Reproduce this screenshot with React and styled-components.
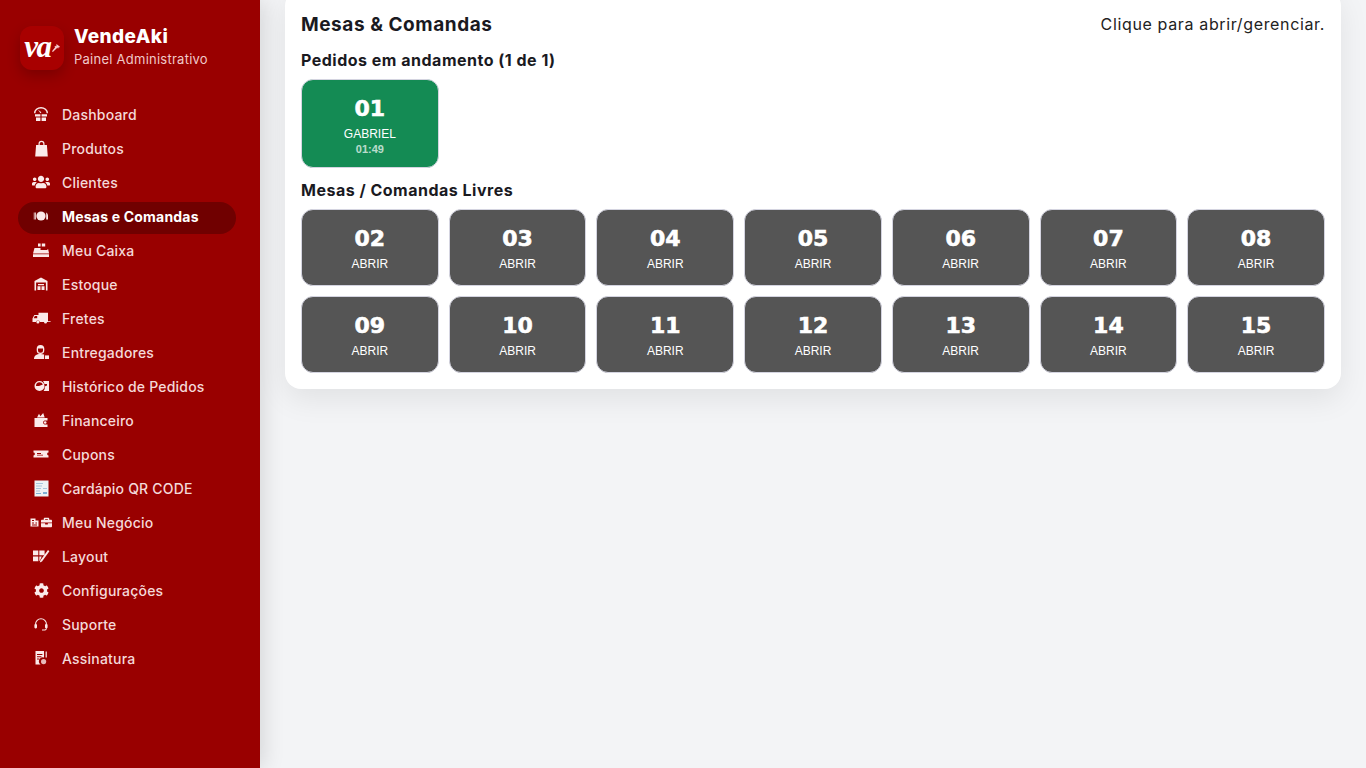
import React from 'react';
import styled, { createGlobalStyle } from 'styled-components';
import { FaUsers, FaCog, FaBriefcase } from 'react-icons/fa';

const GlobalStyle = createGlobalStyle`
  html, body { margin: 0; height: 100%; overflow: hidden; }
  body { font-family: Inter, "Noto Sans", Arial, sans-serif; background: #f3f4f6; }
  * { box-sizing: border-box; }
`;

const Page = styled.div`
  display: flex;
  height: 768px;
  overflow: hidden;
`;

const Sidebar = styled.aside`
  width: 260px;
  flex: none;
  background: #990000;
  box-shadow: 4px 0 20px rgba(0, 0, 0, 0.12);
  padding: 26px 24px 0 18px;
  z-index: 1;
`;

const Brand = styled.div`
  display: flex;
  align-items: flex-start;
  gap: 10px;
  height: 44px;
  padding-left: 2px;
  margin-bottom: 30px;
`;

const Logo = styled.div`
  position: relative;
  width: 44px;
  height: 44px;
  border-radius: 12px;
  background: #a80000;
  box-shadow: 0 6px 14px rgba(0, 0, 0, 0.2);
  display: flex;
  align-items: center;
  justify-content: center;
  color: #fff;
  font: italic 700 31px/1 "Liberation Serif", serif;
  letter-spacing: -1.5px;
  padding-right: 9px;
  padding-bottom: 3px;
  svg { position: absolute; right: 4px; top: 18px; }
`;

const BrandText = styled.div`
  display: flex;
  flex-direction: column;
  gap: 3px;
  margin-top: -1px;
`;

const BrandName = styled.div`
  color: #fff;
  font-size: 19px;
  line-height: 23px;
  font-weight: 800;
  letter-spacing: 0.4px;
`;

const BrandSub = styled.div`
  color: #f0c9c9;
  font-size: 13px;
  line-height: 16px;
  letter-spacing: 0.25px;
`;

const Nav = styled.nav`
  display: flex;
  flex-direction: column;
  gap: 2px;
`;

const NavItem = styled.a`
  display: flex;
  align-items: center;
  gap: 10px;
  height: 32px;
  padding: 0 0 4px 12px;
  border-radius: 16px;
  font-size: 14px;
  letter-spacing: 0.2px;
  font-weight: ${p => (p.$active ? 700 : 500)};
  color: ${p => (p.$active ? '#fff' : '#f4d9d9')};
  background: ${p => (p.$active ? '#700000' : 'transparent')};
`;

const NavIcon = styled.span`
  width: 22px;
  height: 18px;
  flex: none;
  display: flex;
  align-items: center;
  justify-content: center;
  gap: 2px;
  color: #fbeaea;
`;

const Main = styled.main`
  flex: 1;
  padding: 0 25px;
`;

const Card = styled.section`
  margin-top: -10px;
  background: #fff;
  border-radius: 16px;
  padding: 20px 16px 16px;
  box-shadow: 0 10px 30px rgba(0, 0, 0, 0.08);
`;

const CardHeader = styled.header`
  display: flex;
  justify-content: space-between;
  align-items: center;
  height: 28px;
  margin-bottom: 12px;
`;

const Title = styled.h2`
  margin: 0;
  font-size: 19px;
  font-weight: 700;
  letter-spacing: 0.55px;
  color: #1a1a1f;
`;

const Hint = styled.span`
  font-size: 16px;
  letter-spacing: 0.64px;
  color: #222;
`;

const SectionTitle = styled.h3`
  margin: 0 0 9px;
  font-size: 16px;
  line-height: 20px;
  font-weight: 700;
  letter-spacing: 0.5px;
  color: #1a1a1f;
`;

const Grid = styled.div`
  display: grid;
  grid-template-columns: repeat(7, 1fr);
  gap: 10px;
  margin-bottom: ${p => (p.$last ? 0 : '12px')};
`;

const Tile = styled.button`
  display: flex;
  flex-direction: column;
  align-items: center;
  height: ${p => (p.$busy ? '89px' : '77px')};
  padding: 16px 0 0;
  border: 1px solid #d4d4e0;
  border-radius: 12px;
  color: #fff;
  background: ${p => (p.$busy ? '#148b54' : '#555555')};
  font-family: "Liberation Sans", Arial, sans-serif;
`;

const TileNumber = styled.span`
  font: 700 22px/26px "DejaVu Sans", Arial, sans-serif;
  -webkit-text-stroke: 0.6px #fff;
`;

const TileLabel = styled.span`
  margin-top: 5px;
  font-size: 12px;
  line-height: 14px;
`;

const TileTime = styled.span`
  margin-top: 2px;
  font-size: 11px;
  line-height: 12px;
  font-weight: 700;
  opacity: 0.7;
`;

const Svg = ({ w = 16, h = 16, vb = '0 0 16 16', children }) => (
  <svg width={w} height={h} viewBox={vb} fill="currentColor">{children}</svg>
);

const icons = {
  dashboard: (
    <Svg>
      <path d="M1 7.200a7 6.200 0 0 1 14 0h-1.400a5.600 4.800 0 0 0-11.200 0z" />
      <path d="M4.800 3.400l3.600 2.900-.9 1z" />
      <path d="M2 8.200h5.400v2.200H2zM8.600 8.200H14v2.200H8.600zM3 11.400h4.400V15H3zM8.600 11.400H13V15H8.600z" />
    </Svg>
  ),
  bag: (
    <Svg w={15} h={17} vb="0 0 15 17">
      <path fillRule="evenodd" d="M4.500 5V3.800a3 3 0 0 1 6 0V5h2.400l.9 11.500H1.200L2.100 5zm1.200 0h3.600V3.800a1.800 1.800 0 0 0-3.600 0z" />
    </Svg>
  ),
  users: <FaUsers size={18} />,
  plate: (
    <Svg>
      <circle cx="8" cy="8" r="4.600" />
      <path d="M.8 4.500h.8v7H.8zM2.200 4.500h.8v7h-.8zM13.200 4.500c1 .6 1.800 2 1.800 3.200v3.800h-1.800z" />
    </Svg>
  ),
  register: (
    <Svg w={18} h={16} vb="0 0 18 16">
      <path fillRule="evenodd" d="M6 1.500h2.600v3H6zM9.800 1.500h3.400v3H9.800zM2.500 6h6v2h7V7h.6l1 4.500H1zM1 12.200h16V15H1z" />
    </Svg>
  ),
  store: (
    <Svg>
      <path d="M8 1.500L1.500 5v9.500h1.600V6.400h9.800v8.100h1.600V5z" />
      <path d="M5 8h6v1.300H5zM4.500 10.200h3v3.800h-3zM8.500 10.200h3v3.800h-3z" />
    </Svg>
  ),
  truck: (
    <Svg w={19} h={12} vb="0 0 19 12">
      <path fillRule="evenodd" d="M6.500.800h9.500v8.400h2.600v.8H7.800a2 2 0 0 0-3.800 0H.500V6.600l1.800-3.600h4.200zM2.800 4L1.700 6.200h3.500V4z" />
      <circle cx="5.900" cy="10" r="1.500" />
      <circle cx="13.500" cy="10" r="1.500" />
    </Svg>
  ),
  courier: (
    <Svg w={17} h={16} vb="0 0 17 16">
      <path fillRule="evenodd" d="M7.500 1a3.800 3.800 0 0 1 3.800 3.800v1.400a3.800 3.800 0 0 1-7.600 0V4.800A3.800 3.800 0 0 1 7.500 1zm0 3.500H5v1.700a2.500 2.500 0 0 0 5 0V4.500z" />
      <path d="M1 15c0-3.200 2.400-5 6.500-5 1.400 0 2.600.2 3.600.6V15z" />
      <path d="M12 11.400h4v3.600h-4z" />
    </Svg>
  ),
  history: (
    <Svg w={17} h={16} vb="0 0 17 16">
      <path fillRule="evenodd" d="M6.500 3a5 5 0 1 0 0 10 5 5 0 0 0 0-10zm0 1.300a3.700 3.700 0 0 1 3.400 2.200L6 8H3a3.700 3.700 0 0 1 3.500-3.700z" />
      <path d="M10 3h6v10h-5.400a6.200 6.200 0 0 0 1.200-4.600l2.200-1V6h-2.600A6.500 6.500 0 0 0 10 3z" />
    </Svg>
  ),
  wallet: (
    <Svg>
      <path d="M4 5.500L6 1.800l1.400 2.400L10.200 1l1.500 4.500z" />
      <path d="M1.500 6h13v2.600h-3a2 2 0 0 0 0 3.800h3V15h-13z" />
      <circle cx="12.200" cy="10.500" r="1.300" />
    </Svg>
  ),
  coupon: (
    <Svg>
      <path fillRule="evenodd" d="M.5 4.500h15v2.100a1.400 1.400 0 0 0 0 2.800v2.100H.5V9.400a1.400 1.400 0 0 0 0-2.800zM4 7v1h4V7zm0 1.800v.7h6v-.7z" />
    </Svg>
  ),
  menu: (
    <Svg w={15} h={17} vb="0 0 15 17">
      <rect x=".5" y=".5" width="14" height="16" fill="#eef3f5" />
      <path d="M2 3h7v1H2zM2 5.500h6v1H2zM2 8h5v1H2zM9 8h4v1H9zM2 10.500h4v1H2z" fill="#a9c6dc" />
      <path d="M9 12h4v2H9zM2 13h5v1H2z" fill="#7fb0d4" />
    </Svg>
  ),
  business: (
    <>
      <Svg w={9} h={9} vb="0 0 9 9">
        <path fillRule="evenodd" d="M.5.500h5v2h3v6h-8zM2 2v1h2V2zm0 2.400v1h2v-1zM5.400 4.400v1h1.600v-1zM2 6.600v1h5v-1z" />
      </Svg>
      <FaBriefcase size={11} />
    </>
  ),
  layout: (
    <Svg w={18} h={16} vb="0 0 18 16">
      <path d="M1 2.500h5.300v4.800H1zM7.300 2.500h5.300v4.800H7.300zM1 8.400h5.300v4.800H1zM7.300 8.400h2.400L8.200 12l-.9 1.200z" />
      <path d="M16 2l1.400 1.200L10 13.600l-2.200 1 .5-2.200z" />
    </Svg>
  ),
  config: <FaCog size={15} />,
  support: (
    <Svg>
      <path d="M8 2.200a6 6 0 0 0-6 6h1.100a4.900 4.900 0 0 1 9.800 0H14a6 6 0 0 0-6-6z" />
      <rect x="1.400" y="8" width="2.600" height="4.400" rx="1.100" />
      <rect x="12" y="8" width="2.600" height="4.400" rx="1.100" />
      <path d="M13 12.200h.9c0 1.400-1.200 2.300-3 2.300H9v-.9h1.900c1.200 0 2.100-.5 2.100-1.400z" />
    </Svg>
  ),
  signature: (
    <Svg>
      <path fillRule="evenodd" d="M2.500 1h8.500v6.400a4 4 0 0 0-3.400 7.100H2.500zM4 4v1h5.400V4zm0 2.200v1h4.400v-1zm0 2.200v1h2.400v-1z" />
      <circle cx="10.600" cy="11.600" r="2.600" fillOpacity=".8" />
      <path d="M12.600 1.500h1.200v6h-1.200z" />
    </Svg>
  ),
};

const navItems = [
  ['dashboard', 'Dashboard'],
  ['bag', 'Produtos'],
  ['users', 'Clientes'],
  ['plate', 'Mesas e Comandas', true],
  ['register', 'Meu Caixa'],
  ['store', 'Estoque'],
  ['truck', 'Fretes'],
  ['courier', 'Entregadores'],
  ['history', 'Histórico de Pedidos'],
  ['wallet', 'Financeiro'],
  ['coupon', 'Cupons'],
  ['menu', 'Cardápio QR CODE'],
  ['business', 'Meu Negócio'],
  ['layout', 'Layout'],
  ['config', 'Configurações'],
  ['support', 'Suporte'],
  ['signature', 'Assinatura'],
];

const freeTables = ['02', '03', '04', '05', '06', '07', '08', '09', '10', '11', '12', '13', '14', '15'];

export default function App() {
  return (
    <Page>
      <GlobalStyle />
      <Sidebar>
        <Brand>
          <Logo>
            va
            <svg width="8" height="9" viewBox="0 0 9 10" fill="#f6caca">
              <path d="M5 0l4 3-1 1-1-.7.6 1-1 .7-.7-1-.5.8L1 9 0 8l3.500-4.500-.7-.8 1-.7.7.8.4-.6z" />
            </svg>
          </Logo>
          <BrandText>
            <BrandName>VendeAki</BrandName>
            <BrandSub>Painel Administrativo</BrandSub>
          </BrandText>
        </Brand>
        <Nav>
          {navItems.map(([icon, label, active]) => (
            <NavItem key={label} $active={active}>
              <NavIcon>{icons[icon]}</NavIcon>
              {label}
            </NavItem>
          ))}
        </Nav>
      </Sidebar>
      <Main>
        <Card>
          <CardHeader>
            <Title>Mesas &amp; Comandas</Title>
            <Hint>Clique para abrir/gerenciar.</Hint>
          </CardHeader>
          <SectionTitle>Pedidos em andamento (1 de 1)</SectionTitle>
          <Grid>
            <Tile $busy>
              <TileNumber>01</TileNumber>
              <TileLabel>GABRIEL</TileLabel>
              <TileTime>01:49</TileTime>
            </Tile>
          </Grid>
          <SectionTitle>Mesas / Comandas Livres</SectionTitle>
          <Grid $last>
            {freeTables.map(n => (
              <Tile key={n}>
                <TileNumber>{n}</TileNumber>
                <TileLabel>ABRIR</TileLabel>
              </Tile>
            ))}
          </Grid>
        </Card>
      </Main>
    </Page>
  );
}
